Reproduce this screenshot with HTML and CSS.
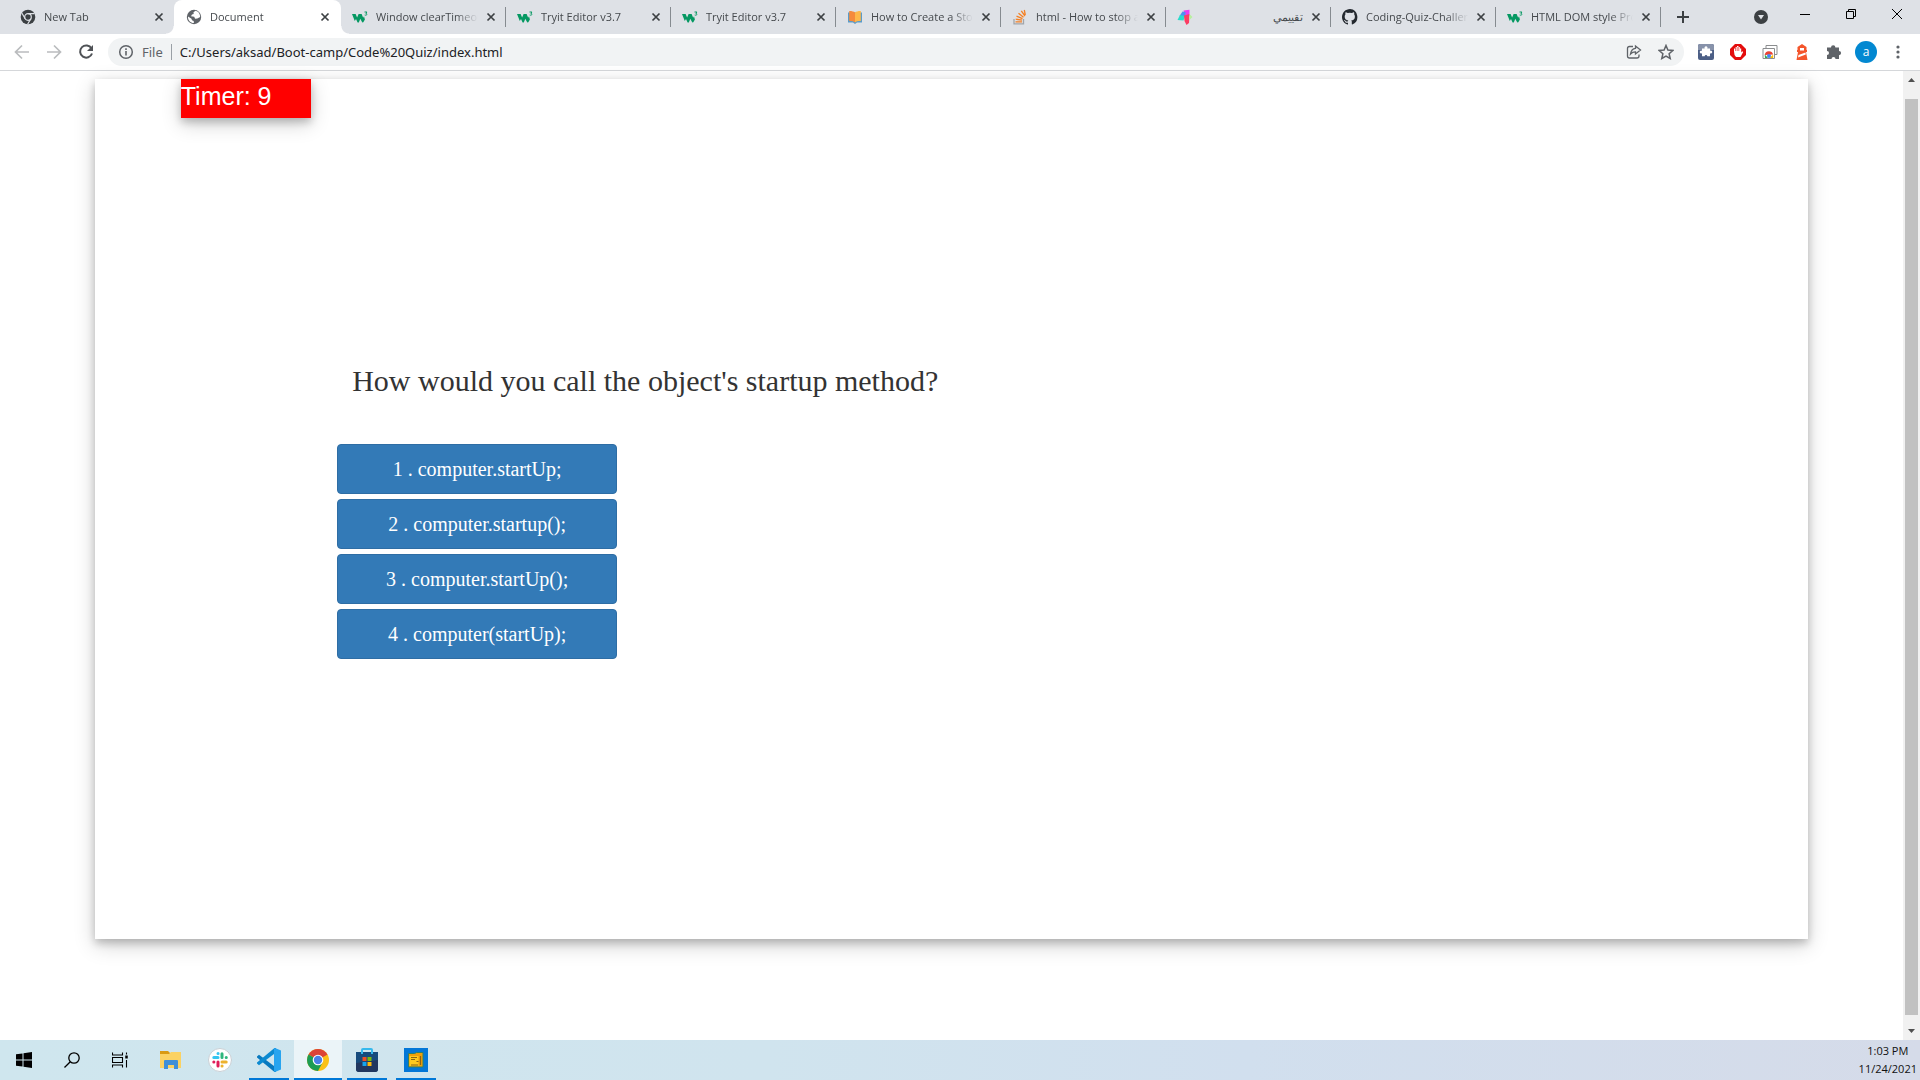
FILE: index.html
```html
<!DOCTYPE html>
<html lang="en">
<head>
<meta charset="utf-8">
<title>Document</title>
<link rel="stylesheet" href="styles.css">
</head>
<body>
<svg class="defs" aria-hidden="true">
  <symbol id="w3" viewBox="0 0 16 16"><path fill="#059862" d="M0 5h3.6l1.5 3.6L6.6 5h3l1.6 3.8.8-1.5.9 3.2-1.6 2.8-1 .2-2-3.7-1.5 3.6-1.2.2-1.6-3.7L2.800 12Z"/><path fill="none" stroke="#059862" stroke-width="1" d="M12.500 3h2.400l-1 1.500c2 0 1 2.300-1.200 1.500"/></symbol>
  <symbol id="close" viewBox="0 0 10 10"><path d="M1.500 1.500l7 7M8.500 1.500l-7 7" stroke="#3c4043" stroke-width="1.700" fill="none"/></symbol>
</svg>

<header class="browser">
  <div class="tabstrip">
    <nav class="tabs" aria-label="Open tabs">
      <div class="tab plain">
        <svg class="favicon" viewBox="0 0 16 16"><circle cx="8" cy="8" r="7.300" fill="#3c4043"/><circle cx="8" cy="8" r="3.300" fill="none" stroke="#dee1e6" stroke-width="1.200"/><path d="M8 4.700h6.500M5.200 9.700 2 4.200M10.800 9.700l-3.200 5.500" stroke="#dee1e6" stroke-width="1.200"/></svg>
        <a class="title" href="#">New Tab</a>
        <button class="close" aria-label="Close tab"><svg><use href="#close"/></svg></button>
      </div>
      <div class="tab active">
        <svg class="favicon" viewBox="0 0 16 16"><circle cx="8" cy="8" r="7.200" fill="#5f6368"/><path fill="#fff" d="M9.500 1.800 7.500 3.300 7.700 5 6 5.500 5 7.300l3.200.4.9 2 2.200-.2 2.900-1.400C14 4.500 12.500 2.500 9.500 1.800ZM2 7.500l3.500 2.200.5 1.600 1.700.8.2 1.900C4.500 14 1.800 11.500 2 7.500Z"/></svg>
        <a class="title" href="#">Document</a>
        <button class="close" aria-label="Close tab"><svg><use href="#close"/></svg></button>
      </div>
      <div class="tab">
        <svg class="favicon"><use href="#w3"/></svg>
        <a class="title" href="#">Window clearTimeout() Method</a>
        <button class="close" aria-label="Close tab"><svg><use href="#close"/></svg></button>
      </div>
      <div class="tab">
        <svg class="favicon"><use href="#w3"/></svg>
        <a class="title" href="#">Tryit Editor v3.7</a>
        <button class="close" aria-label="Close tab"><svg><use href="#close"/></svg></button>
      </div>
      <div class="tab">
        <svg class="favicon"><use href="#w3"/></svg>
        <a class="title" href="#">Tryit Editor v3.7</a>
        <button class="close" aria-label="Close tab"><svg><use href="#close"/></svg></button>
      </div>
      <div class="tab">
        <svg class="favicon" viewBox="0 0 16 16"><path fill="#5b9bc8" d="M1 3.500h14v10h-5L8 15l-2-1.500H1Z"/><path fill="#f58a3c" d="M2.200 2C5 2 7 2.500 8 3.500v10C7 12.300 5 12 2.200 12Z"/><path fill="#fdb84a" d="M13.800 2C11 2 9 2.500 8 3.500v10c1-1.200 3-1.500 5.800-1.500Z"/></svg>
        <a class="title" href="#">How to Create a Stopwatch</a>
        <button class="close" aria-label="Close tab"><svg><use href="#close"/></svg></button>
      </div>
      <div class="tab">
        <svg class="favicon" viewBox="0 0 16 16"><path fill="none" stroke="#a1a5aa" stroke-width="1.300" d="M2 10v4.800h9.500V10"/><path fill="none" stroke="#f48024" stroke-width="1.300" d="M3.500 12.800h6.500M3.700 10.200l6.300 1M4.500 7.200l6 2.400M6.500 4.300l5 4M9.300 1.800l3.700 5.200M12.300 1l1 5"/></svg>
        <a class="title" href="#">html - How to stop a timer</a>
        <button class="close" aria-label="Close tab"><svg><use href="#close"/></svg></button>
      </div>
      <div class="tab">
        <svg class="favicon" viewBox="0 0 16 16"><path fill="#e83cf0" d="M6.500 1.500 12.500.8V7L9 8Z"/><path fill="#4f8ff0" d="M5.500 2.500 8.500 3v5L2.500 7Z"/><path fill="#29dccb" d="M3 6 8 7l-1.500 4.500L.5 11Z"/><path fill="#fb3d63" d="M7 6.500 12.500 5l-.5 9-2.500 2-2-4Z"/><path fill="#b8f0a0" d="M12.500 5 15.500 8l-3 3Z"/></svg>
        <a class="title rtl" href="#" lang="ar" dir="rtl">تقييمي</a>
        <button class="close" aria-label="Close tab"><svg><use href="#close"/></svg></button>
      </div>
      <div class="tab">
        <svg class="favicon" viewBox="0 0 16 16"><path fill="#24292f" d="M8 0C3.600 0 0 3.600 0 8c0 3.500 2.300 6.500 5.500 7.600.4.100.5-.2.500-.4v-1.500c-2 .4-2.700-.5-2.900-1-.1-.3-.5-1-.9-1.200-.3-.2-.7-.6 0-.6.600 0 1.100.6 1.200.8.700 1.200 1.900.9 2.400.7.100-.5.300-.9.500-1.100C4.500 11.100 2.700 10.400 2.700 7.400c0-.9.300-1.600.8-2.100-.1-.2-.4-1 .1-2.100 0 0 .7-.2 2.200.8a7.500 7.500 0 0 1 4 0c1.500-1 2.200-.8 2.200-.8.500 1.100.2 1.900.1 2.100.5.600.8 1.300.8 2.100 0 3.100-1.900 3.700-3.700 3.900.3.300.6.700.6 1.500v2.200c0 .2.100.5.500.4A8 8 0 0 0 8 0Z"/></svg>
        <a class="title" href="#">Coding-Quiz-Challenge/index</a>
        <button class="close" aria-label="Close tab"><svg><use href="#close"/></svg></button>
      </div>
      <div class="tab">
        <svg class="favicon"><use href="#w3"/></svg>
        <a class="title" href="#">HTML DOM style Property</a>
        <button class="close" aria-label="Close tab"><svg><use href="#close"/></svg></button>
      </div>
    </nav>
    <button class="newtab" aria-label="New tab"><svg width="12" height="12" viewBox="0 0 12 12"><path d="M6 0v12M0 6h12" stroke="#3c4043" stroke-width="2"/></svg></button>
    <div class="window-controls">
      <button aria-label="Search tabs"><svg width="14" height="14" viewBox="0 0 14 14"><circle cx="7" cy="7" r="7" fill="#3c4043"/><path fill="#dee1e6" d="M4 5h6L7 9.500Z"/></svg></button>
      <button aria-label="Minimize"><svg width="10" height="10" viewBox="0 0 10 10"><path d="M0 5.500h10" stroke="#000"/></svg></button>
      <button aria-label="Restore"><svg width="10" height="10" viewBox="0 0 10 10"><path d="M.5 2.500h7v7h-7ZM2.500 2.500v-2h7v7h-2" fill="none" stroke="#000"/></svg></button>
      <button aria-label="Close"><svg width="10" height="10" viewBox="0 0 10 10"><path d="M0 0l10 10M10 0 0 10" stroke="#000"/></svg></button>
    </div>
  </div>

  <div class="toolbar">
    <button class="tool" aria-label="Back"><svg width="16" height="16" viewBox="0 0 16 16"><path d="M15 8H2M8 1.500 1.500 8 8 14.500" fill="none" stroke="#babcbe" stroke-width="1.700"/></svg></button>
    <button class="tool" aria-label="Forward"><svg width="16" height="16" viewBox="0 0 16 16"><path d="M1 8h13M8 1.500 14.500 8 8 14.500" fill="none" stroke="#babcbe" stroke-width="1.700"/></svg></button>
    <button class="tool" aria-label="Reload"><svg width="16" height="16" viewBox="0 0 16 16"><path d="M13.500 4.500A6.100 6.100 0 1 0 14 9.500" fill="none" stroke="#4f5256" stroke-width="2"/><path d="M15 1v6H9Z" fill="#4f5256"/></svg></button>
    <div class="omnibox">
      <svg width="16" height="16" viewBox="0 0 16 16"><circle cx="8" cy="8" r="6.300" fill="none" stroke="#5f6368" stroke-width="1.500"/><path d="M8 7v4.500M8 4.300V6" stroke="#5f6368" stroke-width="1.600"/></svg>
      <label class="scheme" for="url">File</label>
      <input id="url" class="url" type="text" value="C:/Users/aksad/Boot-camp/Code%20Quiz/index.html">
      <button class="tool" aria-label="Share"><svg width="16" height="16" viewBox="0 0 16 16" fill="none" stroke="#5f6368" stroke-width="1.300"><path d="M7 2.500H3.500q-2 0-2 2v7.500q0 2 2 2h7.500q2 0 2-2v-1.500"/><path d="M9.500 2l5 4-5 4V7.800C7.500 7.700 6 8.300 4.500 10c.5-3.500 2-5.400 5-5.700Z"/></svg></button>
      <button class="tool" aria-label="Bookmark"><svg width="16" height="16" viewBox="0 0 16 16"><path fill="none" stroke="#5f6368" stroke-width="1.500" d="m8 1.500 1.900 4.600 4.900.4-3.700 3.200 1.100 4.800L8 12l-4.200 2.500 1.100-4.800L1.200 6.500l4.900-.4Z"/></svg></button>
    </div>
    <div class="extensions">
      <button class="tool" aria-label="Puzzle extension"><svg width="16" height="16" viewBox="0 0 16 16"><rect width="16" height="16" rx="2" fill="#4c5f86"/><path fill="#8792aa" d="M2 0h12q2 0 2 2v4H0V2q0-2 2-2Z"/><path fill="#fff" d="M4 4.500h2.700a1.500 1.500 0 1 1 2.600 0H12v2.200a1.500 1.500 0 1 1 0 2.600v3H9.300a1.300 1.300 0 1 0-2.600 0H4v-3a1.500 1.500 0 1 1 0-2.600Z"/></svg></button>
      <button class="tool" aria-label="Ad blocker"><svg width="16" height="16" viewBox="0 0 16 16"><path fill="#e40d0d" d="M5 0h6l5 5v6l-5 5H5l-5-5V5Z"/><path fill="#fff" d="M4 7.500V4.500h1.500V3H7V2h1.500v1H10v1.500h1.200v4l1-1.200 1 .7-2.700 5H6Q4 11 4 7.500Z"/><path stroke="#e40d0d" stroke-width=".6" d="M5.600 3.500V7M7.200 3v4M8.800 3v4"/></svg></button>
      <button class="tool" aria-label="Tab extension"><svg width="16" height="16" viewBox="0 0 16 16"><path fill="#fff" stroke="#8b8d8f" d="M4 1.500h11v9H4Z"/><path fill="#fff" stroke="#8b8d8f" d="M1 4.500h11.500v10H1Z"/><path fill="#ea4335" d="M2.700 11a4.300 4.300 0 0 1 8.400-.5Z"/><path fill="#34a853" d="M2.700 10.500 6 14H3Z"/><path fill="#fbbc04" d="M11.200 10.500V14H7.500Z"/><circle cx="7" cy="12" r="2" fill="#4285f4"/></svg></button>
      <button class="tool" aria-label="Lighthouse"><svg width="16" height="16" viewBox="0 0 16 16"><path fill="#f4552b" d="M8 0l4.500 3v3H13v2h-1l1.500 8h-11L4 8H3V6h.5V3Z"/><path fill="#fff" d="M6 4h4v2.500H6ZM4.500 11l7-2.500.3 2-7.800 3Z"/></svg></button>
      <button class="tool" aria-label="Extensions"><svg width="16" height="16" viewBox="0 0 16 16"><path fill="#5f6368" d="M1 3.500h4a2.200 2.200 0 0 1 4.400 0H13V7a2 2 0 0 1 0 4.200V15H9.500a2 2 0 0 0-4 0H1v-4a2 2 0 0 0 0-4Z"/></svg></button>
      <button class="tool" aria-label="Profile"><span class="avatar">a</span></button>
      <button class="tool" aria-label="Menu"><svg width="16" height="16" viewBox="0 0 16 16" fill="#5f6368"><circle cx="8" cy="3" r="1.600"/><circle cx="8" cy="8" r="1.600"/><circle cx="8" cy="13" r="1.600"/></svg></button>
    </div>
  </div>
</header>

<div class="viewport">
  <main class="page">
    <section class="card">
      <div class="timer">Timer: 9</div>
      <div class="quiz">
        <h1 class="question">How would you call the object's startup method?</h1>
        <div class="answers">
          <button class="answer">1 . computer.startUp;</button>
          <button class="answer">2 . computer.startup();</button>
          <button class="answer">3 . computer.startUp();</button>
          <button class="answer">4 . computer(startUp);</button>
        </div>
      </div>
    </section>
  </main>
  <div class="scrollbar">
    <svg width="7" height="4" viewBox="0 0 7 4"><path fill="#505050" d="M0 4 3.500 0 7 4Z"/></svg>
    <div class="thumb"></div>
    <svg width="7" height="4" viewBox="0 0 7 4"><path fill="#505050" d="M0 0h7L3.500 4Z"/></svg>
  </div>
</div>

<footer class="taskbar">
  <div class="system">
    <button class="task" aria-label="Start"><svg width="16" height="16" viewBox="0 0 16 16"><path d="M0 2.300 6.500 1.400v6.100H0ZM7.500 1.200 16 0v7.500H7.500ZM0 8.500h6.500v6.100L0 13.700ZM7.500 8.500H16V16l-8.500-1.200Z"/></svg></button>
    <button class="task" aria-label="Search"><svg width="16" height="16" viewBox="0 0 16 16" fill="none" stroke="#000" stroke-width="1.300"><circle cx="10" cy="6" r="5.200"/><path d="M6.300 9.700.5 15.500"/></svg></button>
    <button class="task" aria-label="Task view"><svg width="16" height="16" viewBox="0 0 16 16" fill="none" stroke="#000" stroke-width="1.100"><path d="M.5.500v2.500h10V.5M.5 15.500V13h10v2.500M.5 5.500h10v5H.5ZM14.500.5v2M14.500 8v7.500"/><path stroke-width="2.500" d="M14.500 3.500v3"/></svg></button>
  </div>
  <div class="apps">
    <button class="task" aria-label="File Explorer"><svg width="24" height="24" viewBox="0 0 24 24"><path fill="#d99a12" d="M1 3h8l2 2H21v3H1Z"/><path fill="#fbd263" d="M1 6h9l2-2h10v16H1Z"/><path fill="#3f8fd8" d="M5 13q0-1 1-1h12q1 0 1 1v8h-4v-4H9v4H5Z"/></svg></button>
    <button class="task" aria-label="Slack"><svg width="24" height="24" viewBox="0 0 24 24" fill="none" stroke-width="3" stroke-linecap="round"><circle cx="12" cy="12" r="11.500" fill="#fff" stroke="#c9cfd4" stroke-width="1"/><path stroke="#36c5f0" d="M10 5.500h.1M10 9.500H5.800"/><path stroke="#2eb67d" d="M14 5.800v3.700M18.200 9.500h.1"/><path stroke="#ecb22e" d="M14 14h4.200M14 18h.1"/><path stroke="#e01e5a" d="M10 14v4M5.800 14h.1"/></svg></button>
    <button class="task open" aria-label="Visual Studio Code"><svg width="24" height="24" viewBox="0 0 24 24"><path fill="#0879bf" d="M0 8.500 2 6.800 19 19.500V24h-1.500L0 9.500Z"/><path fill="#0b8ad1" d="M0 15.500 2 17.200 19 4.500V0h-1.500L0 14.500Z"/><path fill="#27a4ef" d="M18 0l6 2.500v19L18 24l-1-.8V.8Z"/></svg></button>
    <button class="task open current" aria-label="Google Chrome"><svg width="24" height="24" viewBox="0 0 24 24"><circle cx="12" cy="12" r="11" fill="#fbc116"/><path fill="#dc4437" d="M12 12 2.500 6.500a11 11 0 0 1 19 0Z"/><path fill="#dc4437" d="M12 6.500h9.500L12 9Z"/><path fill="#1c9c55" d="M12 12 2.500 6.500A11 11 0 0 0 12 23l4.500-8.500Z"/><circle cx="12" cy="12" r="5.300" fill="#fff"/><circle cx="12" cy="12" r="4.200" fill="#4a80e8"/></svg></button>
    <button class="task open" aria-label="Microsoft Store"><svg width="24" height="24" viewBox="0 0 24 24"><path fill="#174b7d" d="M1 4h22v17q0 3-3 3H4q-3 0-3-3Z"/><path fill="#22375f" d="M1 15 23 12v9q0 3-3 3H4q-3 0-3-3Z"/><path d="M7 6V2q0-1 1-1h8q1 0 1 1v4" fill="none" stroke="#36b9ed" stroke-width="2"/><path fill="#f05024" d="M7.500 9h4v4h-4Z"/><path fill="#7ebb0b" d="M12.500 9h4v4h-4Z"/><path fill="#16a4ec" d="M7.500 14h4v4h-4Z"/><path fill="#fcb80b" d="M12.500 14h4v4h-4Z"/></svg></button>
    <button class="task open" aria-label="File manager"><svg width="24" height="24" viewBox="0 0 24 24"><path fill="#0477d7" d="M0 0h24v24H0Z"/><path fill="#ef9f0a" stroke="#2d8069" d="M4.500 5.500h6l2-1h6.500V19h-14.500Z"/><path fill="#ffc91e" d="M5.500 8h9v10h-9Z"/><path stroke="#8a6515" stroke-width="1.200" d="M7 9.500h6M7 11.500h4M7 17h7M16.500 8v9M12.500 13.500h2"/></svg></button>
  </div>
  <div class="clock"><time>1:03 PM</time><time>11/24/2021</time></div>
</footer>
</body>
</html>
```
FILE: styles.css
```css
* { box-sizing: border-box; }

body {
  margin: 0;
  min-height: 100vh;
  display: flex;
  flex-direction: column;
  background: #fff;
  color: #333;
  font-family: "Open Sans", "Noto Sans", sans-serif;
}

button {
  margin: 0;
  padding: 0;
  border: 0;
  background: none;
  font: inherit;
  color: inherit;
}

svg { display: block; flex: none; }
.defs { display: none; }

/* Browser window */
.browser { border-bottom: 1px solid #d5d7da; }

.tabstrip {
  display: flex;
  height: 34px;
  padding-left: 9px;
  background: #dee1e6;
}

.tabs { display: flex; }

.tab {
  display: flex;
  align-items: center;
  width: 165px;
  padding: 0 10px 0 11px;
  background: linear-gradient(#868b90, #868b90) right 7px / 1px 20px no-repeat;
}

.tab.plain { background: none; }

.tab.active {
  position: relative;
  width: 167px;
  padding: 0 11px 0 12px;
  background: #fff;
  border-radius: 8px 8px 0 0;
}

/* Curved feet of the selected tab */
.tab.active::before,
.tab.active::after {
  content: "";
  position: absolute;
  bottom: 0;
  width: 8px;
  height: 8px;
}

.tab.active::before { right: 100%; background: radial-gradient(circle at 0 0, transparent 7px, #fff 8px); }
.tab.active::after { left: 100%; background: radial-gradient(circle at 100% 0, transparent 7px, #fff 8px); }

.favicon { width: 16px; height: 16px; }

.title {
  flex: 1;
  min-width: 0;
  margin: 0 8px;
  overflow: hidden;
  white-space: nowrap;
  color: #45494d;
  font-size: 11px;
  line-height: 16px;
  text-decoration: none;
  -webkit-mask-image: linear-gradient(to right, #000 78%, transparent);
  mask-image: linear-gradient(to right, #000 78%, transparent);
}

.title.rtl { -webkit-mask-image: none; mask-image: none; }

.close svg { width: 10px; height: 10px; }

.newtab { display: grid; place-items: center; width: 34px; margin-left: 5px; }

.window-controls {
  display: flex;
  margin-left: auto;
  height: 28px;
}

.window-controls button { display: grid; place-items: center; width: 46px; }
.window-controls button:first-child { width: 42px; height: 34px; }

.toolbar {
  display: flex;
  align-items: center;
  height: 36px;
  padding: 0 6px;
}

.tool { display: grid; place-items: center; width: 32px; height: 28px; }

.omnibox {
  flex: 1;
  display: flex;
  align-items: center;
  height: 28px;
  margin-left: 6px;
  padding: 0 2px 0 10px;
  border-radius: 14px;
  background: #f1f3f4;
  font-family: "Noto Sans", "Open Sans", sans-serif;
  font-size: 13px;
}

.scheme {
  margin-left: 8px;
  padding-right: 8px;
  border-right: 1px solid #9aa0a6;
  color: #5f6368;
  line-height: 16px;
}

.url {
  flex: 1;
  min-width: 0;
  padding: 0 8px;
  border: 0;
  background: none;
  color: #202124;
  font: inherit;
}

.extensions { display: flex; margin-left: 6px; }

.avatar {
  width: 22px;
  height: 22px;
  border-radius: 50%;
  background: #0288d1;
  color: #fff;
  font-size: 12px;
  line-height: 21px;
  text-align: center;
}

/* Quiz page */
.viewport { flex: 1; display: flex; }

.page { flex: 1; padding: 8px 0 101px; }

.card {
  width: 90%;
  height: 100%;
  margin: 0 auto;
  box-shadow: 0 4px 8px rgba(0, 0, 0, .2), 0 6px 20px rgba(0, 0, 0, .19);
}

.timer {
  width: 130px;
  height: 39px;
  margin-left: 5%;
  background: #f00;
  box-shadow: 0 4px 8px rgba(0, 0, 0, .2), 0 6px 20px rgba(0, 0, 0, .19);
  color: #fff;
  font: 25px/34px "Liberation Sans", Arial, sans-serif;
}

.quiz { padding: 246px 242px 0; font-family: "Liberation Serif", "Times New Roman", serif; }

.question {
  margin: 0;
  padding: 0 15px;
  font-size: 30px;
  font-weight: 400;
  line-height: 34px;
}

.answers {
  display: flex;
  flex-direction: column;
  align-items: flex-start;
  gap: 5px;
  margin-top: 46px;
}

.answer {
  width: 280px;
  height: 50px;
  border: 1px solid #2e6da4;
  border-radius: 4px;
  background: #337ab7;
  color: #fff;
  font-size: 20px;
}

.scrollbar {
  display: flex;
  flex-direction: column;
  align-items: center;
  width: 17px;
  padding: 7px 0;
  background: #f1f1f1;
}

.thumb { flex: 1; width: 13px; margin: 17px 0 14px; background: #c1c1c1; }

/* Taskbar */
.taskbar {
  display: flex;
  height: 40px;
  background: linear-gradient(to right, #cfe6ee, #d0e4ee 40%, #d1dfee 65%, #d5dbe9);
}

.system { display: flex; }
.apps { display: flex; gap: 1px; margin-left: 3px; }

.task { display: grid; place-items: center; width: 48px; }
.task.open { background: linear-gradient(#0078d7, #0078d7) bottom / 40px 2px no-repeat; }
.task.current { background: linear-gradient(#0078d7, #0078d7) bottom / 100% 2px no-repeat #ebf4f8; }

.clock {
  display: flex;
  flex-direction: column;
  justify-content: center;
  margin-left: auto;
  padding-right: 3px;
  color: #111;
  font-size: 11px;
  line-height: 18px;
  text-align: center;
}
```
